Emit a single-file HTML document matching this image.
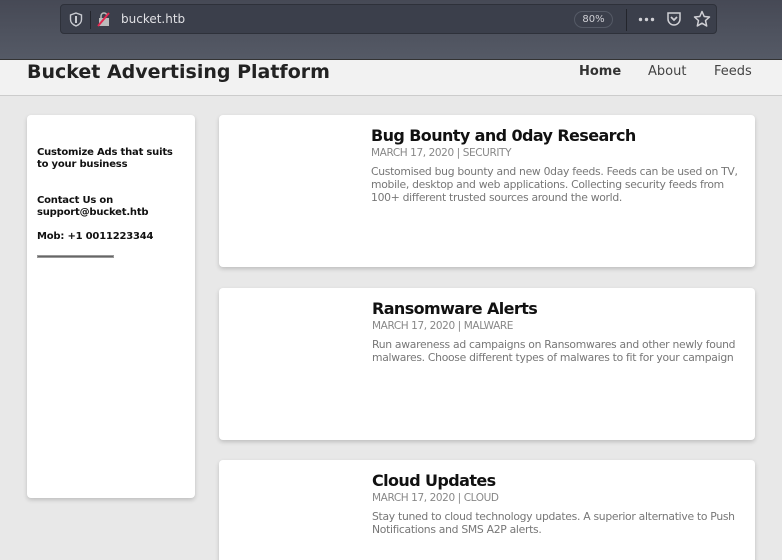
<!DOCTYPE html><html><head><style>
*{margin:0;padding:0;box-sizing:border-box}
html,body{width:782px;height:560px;overflow:hidden}
body{background:#e8e8e8;font-family:"DejaVu Sans","Liberation Sans",sans-serif;position:relative}
.chrome{position:absolute;left:0;top:0;width:782px;height:59px;background:linear-gradient(#464955,#555a66)}
.url{position:absolute;left:60px;top:4px;width:657px;height:30px;background:#3b3f4b;border:1px solid #2e313a;border-radius:4px}
.hdr{position:absolute;left:0;top:59px;width:782px;height:37px;background:#f2f2f2;border-top:1px solid #333;border-bottom:1px solid #ccc}
.card{position:absolute;background:#fff;border-radius:4px;box-shadow:0 2px 4px rgba(0,0,0,.18)}
.t{position:absolute;left:152px;font-weight:bold;font-size:16px;letter-spacing:-0.6px;color:#111;white-space:nowrap}
.m{position:absolute;left:152px;font-size:10.5px;letter-spacing:-0.4px;color:#888;white-space:nowrap}
.d{position:absolute;left:152px;width:372px;font-size:10.8px;letter-spacing:-0.3px;line-height:13px;color:#777}
.side{font-size:10px;letter-spacing:-0.2px;font-weight:bold;color:#111;position:absolute;left:10px;line-height:12px}
</style></head><body>
<div class="chrome"><div class="url">
<svg style="position:absolute;left:8px;top:7px" width="14" height="15" viewBox="0 0 14 15"><path d="M7 1 L12.5 3 V7.5 C12.5 10.5 10 12.8 7 14 C4 12.8 1.5 10.5 1.5 7.5 V3 Z" fill="none" stroke="#c9cbd1" stroke-width="1.4"/><path d="M7 4 V11" stroke="#c9cbd1" stroke-width="2"/></svg>
<div style="position:absolute;left:29px;top:6px;width:1px;height:18px;background:#23252c"></div>
<svg style="position:absolute;left:36px;top:7px" width="14" height="15" viewBox="0 0 14 15"><rect x="2" y="6" width="10" height="8" fill="#bbb"/><path d="M4 6 V4 a3 3 0 0 1 6 0" fill="none" stroke="#bbb" stroke-width="1.5"/><path d="M1 14 L12 1" stroke="#e22850" stroke-width="2"/></svg>
<span style="position:absolute;left:60px;top:7px;font-size:12px;color:#e0e0e4">bucket.htb</span>
<span style="position:absolute;left:513px;top:6px;width:39px;height:17px;border:1px solid #555a66;border-radius:9px;font-size:10px;color:#d0d0d5;text-align:center;line-height:15px">80%</span>
<div style="position:absolute;left:565px;top:4px;width:1px;height:22px;background:#23252c"></div>
<svg style="position:absolute;left:577px;top:12px" width="18" height="5" viewBox="0 0 18 5"><circle cx="2.5" cy="2.5" r="1.7" fill="#d0d0d5"/><circle cx="8.5" cy="2.5" r="1.7" fill="#d0d0d5"/><circle cx="14.5" cy="2.5" r="1.7" fill="#d0d0d5"/></svg>
<svg style="position:absolute;left:605px;top:6px" width="16" height="16" viewBox="0 0 16 16"><path d="M2 2 H14 V8 A6 6 0 0 1 2 8 Z" fill="none" stroke="#d0d0d5" stroke-width="1.5"/><path d="M5 6 L8 9 L11 6" fill="none" stroke="#d0d0d5" stroke-width="1.7"/></svg>
<svg style="position:absolute;left:632px;top:5px" width="18" height="18" viewBox="0 0 18 18"><path d="M9 1.5 L11.2 6.5 L16.5 7 L12.5 10.6 L13.7 16 L9 13.2 L4.3 16 L5.5 10.6 L1.5 7 L6.8 6.5 Z" fill="none" stroke="#d0d0d5" stroke-width="1.5" stroke-linejoin="round"/></svg>
</div></div>
<div class="hdr">
<span style="position:absolute;left:27px;top:1px;font-size:19px;font-weight:bold;color:#222">Bucket Advertising Platform</span>
<span style="position:absolute;left:579px;top:4px;font-size:13px;font-weight:bold;color:#333">Home</span>
<span style="position:absolute;left:648px;top:4px;font-size:13px;color:#444">About</span>
<span style="position:absolute;left:714px;top:4px;font-size:13px;color:#444">Feeds</span>
</div>
<div class="card" style="left:27px;top:115px;width:168px;height:383px">
<div class="side" style="top:32px">Customize Ads that suits<br>to your business</div>
<div class="side" style="top:80px">Contact Us on<br>support@bucket.htb</div>
<div class="side" style="top:116px">Mob: +1 0011223344</div>
<div style="position:absolute;left:10px;top:140px;width:77px;height:3px;background:#666;border:1px solid #999"></div>
</div>
<div class="card" style="left:219px;top:115px;width:536px;height:152px">
<div class="t" style="top:11px">Bug Bounty and 0day Research</div>
<div class="m" style="top:32px">MARCH 17, 2020 | SECURITY</div>
<div class="d" style="top:50px">Customised bug bounty and new 0day feeds. Feeds can be used on TV, mobile, desktop and web applications. Collecting security feeds from 100+ different trusted sources around the world.</div>
</div>
<div class="card" style="left:219px;top:288px;width:536px;height:152px">
<div class="t" style="top:11px;left:153px">Ransomware Alerts</div>
<div class="m" style="top:32px;left:153px">MARCH 17, 2020 | MALWARE</div>
<div class="d" style="top:50px;left:153px;width:380px">Run awareness ad campaigns on Ransomwares and other newly found malwares. Choose different types of malwares to fit for your campaign</div>
</div>
<div class="card" style="left:219px;top:460px;width:536px;height:110px">
<div class="t" style="top:11px;left:153px">Cloud Updates</div>
<div class="m" style="top:32px;left:153px">MARCH 17, 2020 | CLOUD</div>
<div class="d" style="top:50px;left:153px;width:370px">Stay tuned to cloud technology updates. A superior alternative to Push Notifications and SMS A2P alerts.</div>
</div>
</body></html>
